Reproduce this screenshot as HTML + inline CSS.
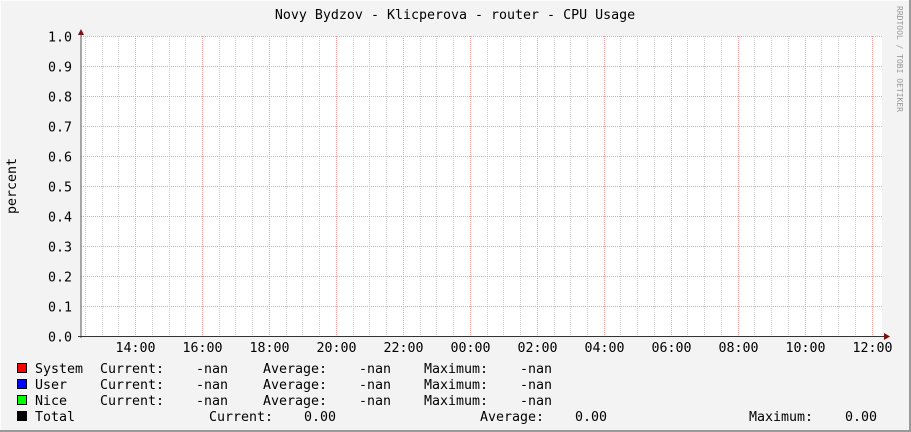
<!DOCTYPE html>
<html><head><style>
html,body{margin:0;padding:0;background:#f3f3f3;}
svg{display:block;}
text{font-family:"DejaVu Sans Mono","Liberation Mono",monospace;font-size:13.3px;fill:#000;}
</style></head><body>
<svg width="911" height="432" xmlns="http://www.w3.org/2000/svg">
<rect x="0" y="0" width="911" height="432" fill="#f3f3f3"/>
<rect x="0" y="0" width="911" height="1" fill="#fcfcfc"/>
<rect x="0" y="0" width="1" height="432" fill="#fcfcfc"/>
<rect x="909" y="0" width="2" height="432" fill="#9a9a9a"/>
<rect x="0" y="430" width="911" height="2" fill="#9a9a9a"/>
<rect x="81" y="36" width="801" height="300" fill="#fff"/>
<g id="g"></g>
<text x="455" y="19" text-anchor="middle">Novy Bydzov - Klicperova - router - CPU Usage</text>
<text transform="translate(16,186) rotate(-90)" text-anchor="middle">percent</text>
<text transform="translate(897,6) rotate(90)" style="font-size:8px;fill:#999">RRDTOOL / TOBI OETIKER</text>
<g text-anchor="end" id="yl"></g>
<g text-anchor="middle" id="xl"></g>
<line x1="81" y1="338" x2="81" y2="32" stroke="#555" stroke-width="1"/>
<line x1="78" y1="336.5" x2="886" y2="336.5" stroke="#333" stroke-width="1"/>
<polygon points="78,35 84,35 81,29" fill="#7a1010"/>
<polygon points="884,333 884,340 890,336.5" fill="#7a1010"/>
<g stroke="#000" stroke-width="1">
<rect x="17.5" y="363.5" width="9" height="9" fill="#f00"/>
<rect x="17.5" y="379.5" width="9" height="9" fill="#00f"/>
<rect x="17.5" y="395.5" width="9" height="9" fill="#0f0"/>
<rect x="17.5" y="411.5" width="9" height="9" fill="#000"/>
</g>
<g style="white-space:pre">
<text x="35" y="373">System</text><text x="100" y="373">Current:</text><text x="228" y="373" text-anchor="end">-nan</text><text x="263" y="373">Average:</text><text x="391" y="373" text-anchor="end">-nan</text><text x="424" y="373">Maximum:</text><text x="552" y="373" text-anchor="end">-nan</text>
<text x="35" y="389">User</text><text x="100" y="389">Current:</text><text x="228" y="389" text-anchor="end">-nan</text><text x="263" y="389">Average:</text><text x="391" y="389" text-anchor="end">-nan</text><text x="424" y="389">Maximum:</text><text x="552" y="389" text-anchor="end">-nan</text>
<text x="35" y="405">Nice</text><text x="100" y="405">Current:</text><text x="228" y="405" text-anchor="end">-nan</text><text x="263" y="405">Average:</text><text x="391" y="405" text-anchor="end">-nan</text><text x="424" y="405">Maximum:</text><text x="552" y="405" text-anchor="end">-nan</text>
<text x="35" y="421">Total</text><text x="209" y="421">Current:</text><text x="336" y="421" text-anchor="end">0.00</text><text x="480" y="421">Average:</text><text x="607" y="421" text-anchor="end">0.00</text><text x="749" y="421">Maximum:</text><text x="877" y="421" text-anchor="end">0.00</text>
</g>
<script>
var ns="http://www.w3.org/2000/svg",g=document.getElementById("g");
function ln(x1,y1,x2,y2,c){var l=document.createElementNS(ns,"line");l.setAttribute("x1",x1);l.setAttribute("y1",y1);l.setAttribute("x2",x2);l.setAttribute("y2",y2);l.setAttribute("stroke",c);l.setAttribute("stroke-dasharray","1,1");g.appendChild(l);}
for(var x=84.8;x<882;x+=16.74){var xx=Math.round(x)+0.5;ln(xx,36,xx,336,"#d0d0d0");}
var labs=["14:00","16:00","18:00","20:00","22:00","00:00","02:00","04:00","06:00","08:00","10:00","12:00"],xl=document.getElementById("xl");
for(var k=0;k<12;k++){var xx=Math.round(135+66.97*k)+0.5;ln(xx,36,xx,336,"#f4a0a0");var t=document.createElementNS(ns,"text");t.setAttribute("x",xx);t.setAttribute("y",352);t.textContent=labs[k];xl.appendChild(t);}
var yl=document.getElementById("yl");
for(var i=0;i<=10;i++){var y=336-30*i+0.5;if(i>0)ln(81,y,882,y,"#f4a0a0");var t=document.createElementNS(ns,"text");t.setAttribute("x",72);t.setAttribute("y",y+5);t.textContent=(i/10).toFixed(1);yl.appendChild(t);}
</script>
</svg>
</body></html>
